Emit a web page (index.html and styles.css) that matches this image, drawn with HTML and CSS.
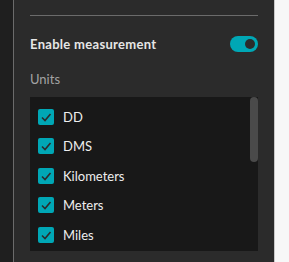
FILE: index.html
```html
<!DOCTYPE html>
<html lang="en">
<head>
    <meta charset="UTF-8">
    <meta name="viewport" content="width=device-width, initial-scale=1.0">
    <title>Measurement settings</title>
    <link rel="stylesheet" href="styles.css">
</head>
<body>
    <div class="layout">
        <div class="side-strip"></div>
        <div class="panel">
            <hr class="divider">
            <div class="setting-row">
                <span class="setting-label">Enable measurement</span>
                <span class="toggle"><span class="knob"></span></span>
            </div>
            <div class="group-label">Units</div>
            <div class="unit-box">
                <ul class="unit-list">
                    <li><span class="check"><svg viewBox="0 0 16 16"><polyline points="4,8.5 7,11.5 12.5,5"/></svg></span>DD</li>
                    <li><span class="check"><svg viewBox="0 0 16 16"><polyline points="4,8.5 7,11.5 12.5,5"/></svg></span>DMS</li>
                    <li><span class="check"><svg viewBox="0 0 16 16"><polyline points="4,8.5 7,11.5 12.5,5"/></svg></span>Kilometers</li>
                    <li><span class="check"><svg viewBox="0 0 16 16"><polyline points="4,8.5 7,11.5 12.5,5"/></svg></span>Meters</li>
                    <li><span class="check"><svg viewBox="0 0 16 16"><polyline points="4,8.5 7,11.5 12.5,5"/></svg></span>Miles</li>
                </ul>
                <div class="scroll-thumb"></div>
            </div>
        </div>
        <div class="right-strip"></div>
    </div>
</body>
</html>
```

FILE: styles.css
```css
html, body {
    margin: 0;
    padding: 0;
    height: 100%;
    font-family: Lato, "Open Sans", sans-serif;
    font-size: 13px;
    background-color: #2b2b2b;
}
.layout {
    display: flex;
    height: 262px;
}
.side-strip {
    width: 13px;
    background-color: #1f1f1f;
    border-right: 1px solid #6b6b6b;
}
.panel {
    width: 228px;
    padding: 0 16px;
    background-color: #2b2b2b;
}
.right-strip {
    flex: 1;
    background-color: #f7f7f7;
    border-left: 1px solid #c9c9c9;
}
.divider {
    margin: 15px 0 0;
    border: 0;
    height: 1px;
    background-color: #6b6b6b;
}
.setting-row {
    display: flex;
    align-items: center;
    justify-content: space-between;
    height: 16px;
    margin-top: 20px;
}
.setting-label {
    color: #e6e6e6;
    font-weight: bold;
    letter-spacing: 0.3px;
}
.toggle {
    position: relative;
    width: 28px;
    height: 16px;
    border-radius: 8px;
    background-color: #00a7b5;
}
.knob {
    position: absolute;
    top: 3px;
    right: 3px;
    width: 10px;
    height: 10px;
    border-radius: 50%;
    background-color: #2b2b2b;
}
.group-label {
    margin-top: 19px;
    line-height: 16px;
    color: #a3a3a3;
}
.unit-box {
    position: relative;
    margin-top: 10px;
    height: 154px;
    background-color: #181818;
}
.unit-list {
    list-style: none;
    margin: 0;
    padding: 5px 0 0 8px;
}
.unit-list li {
    display: flex;
    align-items: center;
    gap: 9px;
    height: 29.5px;
    color: #eeeeee;
}
.check {
    display: flex;
    width: 16px;
    height: 16px;
    border-radius: 2px;
    background-color: #00a7b5;
}
.check svg {
    width: 16px;
    height: 16px;
    fill: none;
    stroke: #2b2b2b;
    stroke-width: 1.6;
}
.scroll-thumb {
    position: absolute;
    top: 0;
    right: 0;
    width: 8px;
    height: 65px;
    border-radius: 4px;
    background-color: #4a4a4a;
}
```
